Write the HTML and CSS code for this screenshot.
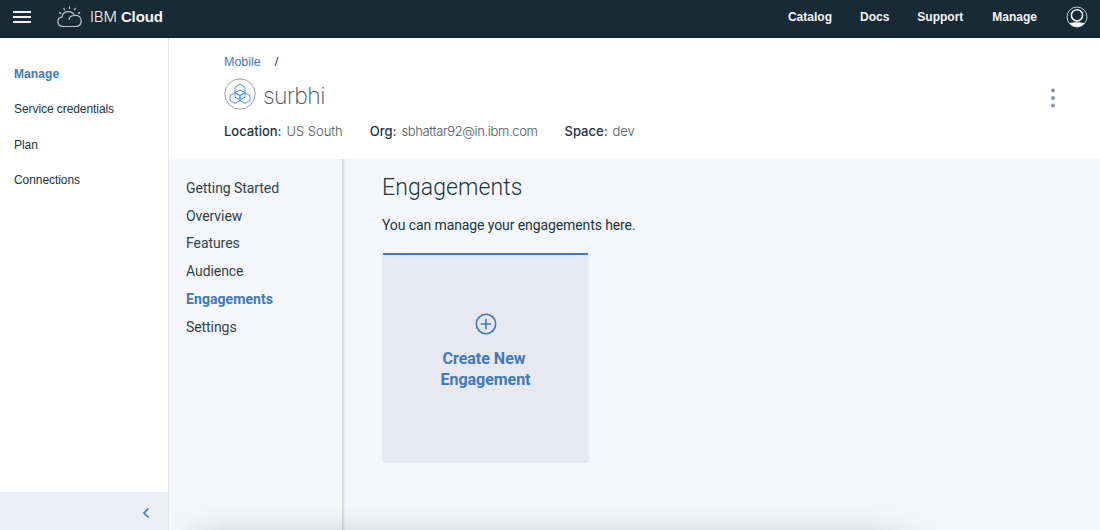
FILE: index.html
```html
<!DOCTYPE html>
<html lang="en">
<head>
<meta charset="utf-8">
<title>IBM Cloud</title>
<link rel="stylesheet" href="styles.css">
</head>
<body>
<header class="topbar">
  <svg class="menu" width="18" height="14" viewBox="0 0 18 14"><path d="M0 2h18M0 7h18M0 12h18"/></svg>
  <svg class="cloud" width="26" height="22" viewBox="0 0 26 22"><path d="M6 20.500C2.800 20.500.9 18.600.9 15.800c0-2.700 1.700-4.500 4.200-4.900C5.300 7.500 8 5.600 11.500 5.600c3 0 5 1.500 6 3.900 4-.6 6.700 1.800 6.700 5.300 0 3.600-2.400 5.700-5.600 5.700zM12 14c.2-2.900 2.500-4.500 5.500-4.500M12.500.4v2.700M6.600 1.900l1.200 2.300M18.500 1.900l-1.300 2.300M2 6.400l2.200 1.200M23.100 6.400l-2.200 1.200"/></svg>
  <div class="brand"><span class="brand-ibm">IBM</span> <b>Cloud</b></div>
  <nav class="topnav">
    <a class="catalog">Catalog</a><a class="docs">Docs</a><a class="support">Support</a><a class="account">Manage</a>
    <svg class="avatar" width="22" height="22" viewBox="0 0 22 22"><circle class="ring" cx="11" cy="11" r="10"/><circle class="head" cx="11" cy="9.300" r="5.600"/><path d="M3.700 17.200c2-.9 4.600-1 7.300-1s5.300.1 7.300 1c-1.700 2.300-4.300 3.600-7.300 3.600s-5.600-1.300-7.300-3.600z"/></svg>
  </nav>
</header>
<div class="layout">
  <aside class="sidebar">
    <nav class="sidelinks"><a class="current">Manage</a><a>Service credentials</a><a>Plan</a><a>Connections</a></nav>
    <div class="collapse"><svg width="8" height="12" viewBox="0 0 8 12"><path d="M6.400 1.500L2 6l4.400 4.500"/></svg></div>
  </aside>
  <main class="main">
    <section class="service">
      <div class="crumbs"><a>Mobile</a><span>/</span></div>
      <div class="title-row">
        <svg class="hex" width="32" height="32" viewBox="0 0 32 32"><circle cx="16" cy="16" r="15.200"/><path d="M16 6.500l5 2.700v5.600l-5 2.700-5-2.700V9.200zM11 14.800l5 2.700v5.100l-5 2.800-5-2.800v-5.100zM21 14.800l5 2.700v5.100l-5 2.800-5-2.800v-5.100zM16 12l5 2.800v4.400l-5 2.800-5-2.800v-4.400z"/></svg>
        <h1>surbhi</h1>
        <svg class="more" width="6" height="20" viewBox="0 0 6 20"><circle cx="3" cy="2.500" r="2"/><circle cx="3" cy="10" r="2"/><circle cx="3" cy="17.500" r="2"/></svg>
      </div>
      <dl class="meta">
        <div class="location"><dt>Location:</dt><dd>US South</dd></div>
        <div class="org"><dt>Org:</dt><dd>sbhattar92@in.ibm.com</dd></div>
        <div class="space"><dt>Space:</dt><dd>dev</dd></div>
      </dl>
    </section>
    <div class="workspace">
      <nav class="subnav"><a>Getting Started</a><a>Overview</a><a>Features</a><a>Audience</a><a class="current">Engagements</a><a>Settings</a></nav>
      <section class="content">
        <h2>Engagements</h2>
        <p>You can manage your engagements here.</p>
        <button class="create">
          <svg width="22" height="22" viewBox="0 0 22 22"><circle cx="11" cy="11" r="9.700"/><path d="M11 5.800v10.400M5.800 11h10.400"/></svg>
          <span class="line-one">Create New</span><span class="line-two">Engagement</span>
        </button>
      </section>
    </div>
  </main>
</div>
<div class="bottom-shadow"></div>
</body>
</html>
```
FILE: styles.css
```css
* { box-sizing: border-box; }
body { margin: 0; height: 530px; overflow: hidden; display: flex; flex-direction: column; background: #fff; color: #21343f; font-family: "Liberation Sans", Arial, sans-serif; position: relative; }
h1, h2, p, dl, dd { margin: 0; }
svg { fill: none; flex: none; }
.topbar { height: 38px; flex: none; background: #172a35; color: #f4f6f7; display: flex; align-items: center; padding: 0 13px 4px; border-bottom: 1px solid #12232d; }
.menu { stroke: #eef1f2; stroke-width: 2; margin-right: 26px; }
.cloud { stroke: #bcc5ca; stroke-width: 1.2; margin-right: 7px; }
.brand { font-size: 15px; letter-spacing: -.12px; white-space: nowrap; }
.brand-ibm { font-family: Inter, sans-serif; font-weight: 300; }
.topnav { margin-left: auto; display: flex; align-items: center; font-size: 12px; font-weight: bold; white-space: nowrap; }
.catalog, .docs { margin-right: 28px; }
.support { margin-right: 29px; }
.account { margin-right: 29px; }
.avatar { margin-right: -1px; fill: #fff; }
.avatar .ring { fill: none; stroke: #bfc8cc; stroke-width: 1; }
.avatar .head { fill: none; stroke: #fff; stroke-width: 1.5; }
.layout { display: flex; flex: 1; min-height: 0; }
.sidebar { width: 169px; border-right: 1px solid #e3e6ea; display: flex; flex-direction: column; justify-content: space-between; }
.sidelinks { display: flex; flex-direction: column; gap: 15.300px; padding: 26px 0 0 14px; font-size: 12px; line-height: 20px; letter-spacing: -.07px; white-space: nowrap; }
.sidelinks .current { color: #4178be; font-weight: bold; letter-spacing: .1px; }
.collapse { height: 38px; background: #ebeff5; display: flex; align-items: center; justify-content: flex-end; padding: 4px 18px 0 0; stroke: #4178be; stroke-width: 1.7; }
.main { flex: 1; display: flex; flex-direction: column; min-width: 0; }
.service { height: 121px; padding: 16px 44px 0 55px; }
.crumbs { display: flex; gap: 14px; font-size: 12.500px; line-height: 16px; }
.crumbs a { color: #4178be; }
.title-row { display: flex; align-items: center; height: 32px; margin-top: 8px; }
.hex { stroke: #4a90e2; stroke-width: 1; }
.hex circle { stroke: #98a5ae; }
.service h1 { font: 200 23px/32px Inter, sans-serif; color: #43525b; margin: 3px 0 0 7px; letter-spacing: -.6px; }
.more { margin: 8px 0 0 auto; fill: #8796a3; }
.meta { display: flex; margin-top: 13px; gap: 27px; font: 13px/16px Inter, sans-serif; white-space: nowrap; }
.meta div { display: flex; gap: 5px; }
.meta dt { font-weight: 500; }
.meta dd { font-weight: 300; color: #4b5860; letter-spacing: -.05px; }
.meta .org dd { letter-spacing: -.36px; }
.workspace { flex: 1; display: flex; background: #f5f7fb; font-family: Roboto, sans-serif; min-height: 0; }
.subnav { width: 174px; border-right: 1px solid #d6dade; box-shadow: 1px 0 2px #d2d6da; clip-path: inset(0 -4px 0 0); padding: 16px 0 0 17px; display: flex; flex-direction: column; font-size: 14px; line-height: 27.700px; letter-spacing: -.07px; color: #30434c; }
.subnav .current { color: #4178be; font-weight: bold; letter-spacing: .08px; }
.content { padding: 12px 0 0 39px; display: flex; flex-direction: column; align-items: flex-start; }
.content h2 { font-size: 23px; font-weight: 300; line-height: 34px; letter-spacing: .1px; }
.content p { font-size: 14px; line-height: 20px; margin-top: 10px; letter-spacing: -.1px; white-space: nowrap; }
.create { margin: 18px 0 0 1px; width: 205px; height: 208px; padding: 58px 0 0; border: 0; border-top: 2px solid #4178be; background: #e6e9f1; box-shadow: 0 1px 2px #cfd2d8; display: flex; flex-direction: column; align-items: center; color: #4178be; font: bold 16px/21px Roboto, sans-serif; }
.create svg { stroke: #4178be; stroke-width: 1.6; margin-bottom: 13px; }
.line-one { margin-right: 3px; }
.line-two { letter-spacing: -.05px; }
.bottom-shadow { position: absolute; left: 169px; bottom: 0; width: 770px; height: 26px; background: linear-gradient(to bottom, transparent, rgba(0,0,0,.025) 50%, rgba(0,0,0,.075)); mask-image: linear-gradient(to right, transparent, #000 55px, #000 690px, transparent); }
```
